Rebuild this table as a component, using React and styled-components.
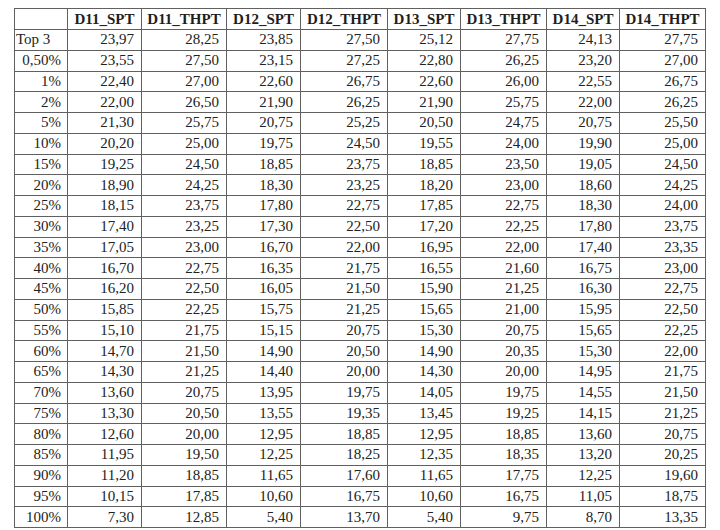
import styled, { createGlobalStyle } from 'styled-components';

const GlobalStyle = createGlobalStyle`
  html, body {
    margin: 0;
    padding: 0;
    background: #ffffff;
  }
  body {
    font-family: 'Liberation Serif', 'Times New Roman', serif;
    color: #222222;
  }
`;

const Page = styled.div`
  padding: 8px 0 0 14px;
`;

const Table = styled.table`
  border-collapse: collapse;
  table-layout: fixed;
  width: 691px;
  font-size: 15px;
  line-height: 1;
  border: 1px solid #606060;
`;

const Row = styled.tr`
  height: ${(p) => (p.$head ? '21px' : '20.75px')};
`;

const HeadCell = styled.th`
  border: 1px solid #606060;
  font-weight: bold;
  text-align: center;
  padding: 0 2px;
  white-space: nowrap;
  color: #1e1e1e;
`;

const LabelCell = styled.td`
  border: 1px solid #606060;
  text-align: ${(p) => (p.$left ? 'left' : 'right')};
  padding: 0 6px 0 1px;
  white-space: nowrap;
`;

const NumCell = styled.td`
  border: 1px solid #606060;
  text-align: right;
  padding: 0 7px 0 0;
  white-space: nowrap;
`;

const widths = [53, 74, 85, 74, 87, 73, 86, 73, 86];
const heads = ['', 'D11_SPT', 'D11_THPT', 'D12_SPT', 'D12_THPT', 'D13_SPT', 'D13_THPT', 'D14_SPT', 'D14_THPT'];

const rows = [
  ['Top 3', '23,97', '28,25', '23,85', '27,50', '25,12', '27,75', '24,13', '27,75'],
  ['0,50%', '23,55', '27,50', '23,15', '27,25', '22,80', '26,25', '23,20', '27,00'],
  ['1%', '22,40', '27,00', '22,60', '26,75', '22,60', '26,00', '22,55', '26,75'],
  ['2%', '22,00', '26,50', '21,90', '26,25', '21,90', '25,75', '22,00', '26,25'],
  ['5%', '21,30', '25,75', '20,75', '25,25', '20,50', '24,75', '20,75', '25,50'],
  ['10%', '20,20', '25,00', '19,75', '24,50', '19,55', '24,00', '19,90', '25,00'],
  ['15%', '19,25', '24,50', '18,85', '23,75', '18,85', '23,50', '19,05', '24,50'],
  ['20%', '18,90', '24,25', '18,30', '23,25', '18,20', '23,00', '18,60', '24,25'],
  ['25%', '18,15', '23,75', '17,80', '22,75', '17,85', '22,75', '18,30', '24,00'],
  ['30%', '17,40', '23,25', '17,30', '22,50', '17,20', '22,25', '17,80', '23,75'],
  ['35%', '17,05', '23,00', '16,70', '22,00', '16,95', '22,00', '17,40', '23,35'],
  ['40%', '16,70', '22,75', '16,35', '21,75', '16,55', '21,60', '16,75', '23,00'],
  ['45%', '16,20', '22,50', '16,05', '21,50', '15,90', '21,25', '16,30', '22,75'],
  ['50%', '15,85', '22,25', '15,75', '21,25', '15,65', '21,00', '15,95', '22,50'],
  ['55%', '15,10', '21,75', '15,15', '20,75', '15,30', '20,75', '15,65', '22,25'],
  ['60%', '14,70', '21,50', '14,90', '20,50', '14,90', '20,35', '15,30', '22,00'],
  ['65%', '14,30', '21,25', '14,40', '20,00', '14,30', '20,00', '14,95', '21,75'],
  ['70%', '13,60', '20,75', '13,95', '19,75', '14,05', '19,75', '14,55', '21,50'],
  ['75%', '13,30', '20,50', '13,55', '19,35', '13,45', '19,25', '14,15', '21,25'],
  ['80%', '12,60', '20,00', '12,95', '18,85', '12,95', '18,85', '13,60', '20,75'],
  ['85%', '11,95', '19,50', '12,25', '18,25', '12,35', '18,35', '13,20', '20,25'],
  ['90%', '11,20', '18,85', '11,65', '17,60', '11,65', '17,75', '12,25', '19,60'],
  ['95%', '10,15', '17,85', '10,60', '16,75', '10,60', '16,75', '11,05', '18,75'],
  ['100%', '7,30', '12,85', '5,40', '13,70', '5,40', '9,75', '8,70', '13,35'],
];

export default function App() {
  return (
    <Page>
      <GlobalStyle />
      <Table>
        <colgroup>
          {widths.map((w, i) => (
            <col key={i} style={{ width: w }} />
          ))}
        </colgroup>
        <thead>
          <Row $head>
            {heads.map((h, i) => (
              <HeadCell key={i}>{h}</HeadCell>
            ))}
          </Row>
        </thead>
        <tbody>
          {rows.map((r) => (
            <Row key={r[0]}>
              <LabelCell $left={r[0] === 'Top 3'}>{r[0]}</LabelCell>
              {r.slice(1).map((v, i) => (
                <NumCell key={i}>{v}</NumCell>
              ))}
            </Row>
          ))}
        </tbody>
      </Table>
    </Page>
  );
}
